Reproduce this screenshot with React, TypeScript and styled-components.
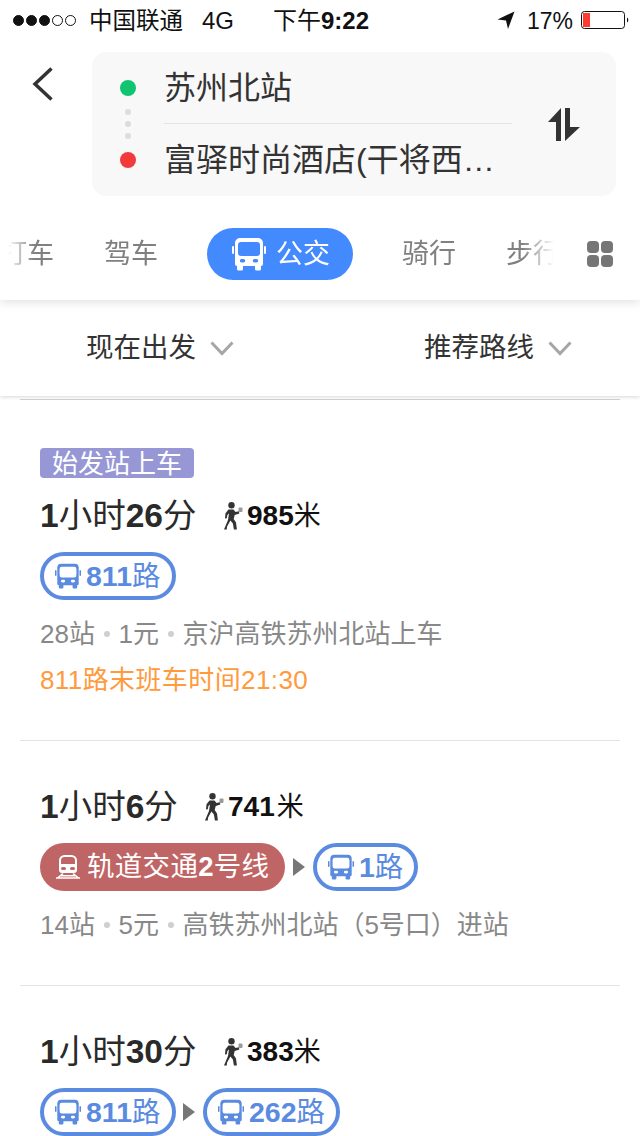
import styled, { createGlobalStyle } from 'styled-components';

const GlobalStyle = createGlobalStyle`
  html, body {
    margin: 0;
    padding: 0;
    background: #fff;
  }
  body {
    font-family: 'Liberation Sans', 'Noto Sans CJK SC', sans-serif;
  }
`;

const BusIcon = ({ color, size = 26 }: { color: string; size?: number }) => (
  <svg width={size} height={size} viewBox='0 0 34 34'>
    <path
      fill={color}
      fillRule='evenodd'
      d='M8 1h18a5 5 0 0 1 5 5v21a2 2 0 0 1-2 2v3a1.500 1.500 0 0 1-1.500 1.500h-3A1.500 1.500 0 0 1 23 32v-3H11v3a1.500 1.500 0 0 1-1.500 1.500h-3A1.500 1.500 0 0 1 5 32v-3a2 2 0 0 1-2-2V6a5 5 0 0 1 5-5zM9 5a3 3 0 0 0-3 3v8a3 3 0 0 0 3 3h16a3 3 0 0 0 3-3V8a3 3 0 0 0-3-3zM9.500 22a1.700 1.700 0 0 0 0 3.400h2a1.700 1.700 0 0 0 0-3.400zM22.500 22a1.700 1.700 0 0 0 0 3.400h2a1.700 1.700 0 0 0 0-3.400z'
    />
    <rect x='0' y='9' width='2' height='8' rx='1' fill={color} />
    <rect x='32' y='9' width='2' height='8' rx='1' fill={color} />
  </svg>
);

const RailIcon = () => (
  <svg width={26} height={24} viewBox='0 0 26 24'>
    <path
      fill='#fff'
      fillRule='evenodd'
      d='M9.500 0h7A5.500 5.500 0 0 1 22 5.500V15a3 3 0 0 1-3 3H7a3 3 0 0 1-3-3V5.500A5.500 5.500 0 0 1 9.500 0zM9.500 2A3.500 3.500 0 0 0 6 5.500V9h14V5.500A3.500 3.500 0 0 0 16.500 2zM7.500 12a1.500 1.500 0 0 0 0 3h2a1.500 1.500 0 0 0 0-3zM16.500 12a1.500 1.500 0 0 0 0 3h2a1.500 1.500 0 0 0 0-3z'
    />
    <path d='M8 18.500L2.500 23M18 18.500L23.500 23M1 23h24M5.500 20.800h15' fill='none' stroke='#fff' strokeWidth='1.600' />
  </svg>
);

const WalkIcon = () => (
  <svg width={20} height={28} viewBox='0 0 20 28'>
    <circle cx='7.500' cy='3.300' r='3.200' fill='#333' />
    <path
      fill='#333'
      d='M4.500 7.500h5l2 2.500 3.300-.8.600 2.300-4.700 1.500-1 4 2.300 3.500.9 7h-3l-1-6-2.500-3-3.400 6.300-.2 2.700H0l.4-1 3.600-8.500 1-6.500-1.600 1.500-.6 3.300L1 16.500l.5-5.300z'
    />
    <rect x='14.500' y='5.500' width='4' height='4.500' rx='1' fill='#999' />
  </svg>
);

const Chevron = () => (
  <svg width={24} height={15} viewBox='0 0 24 15' fill='none'>
    <path d='M1.500 1.500L12 12.500 22.500 1.500' stroke='#a6a6a6' strokeWidth='3' />
  </svg>
);

const Page = styled.div`
  width: 640px;
  height: 1136px;
  overflow: hidden;
  background: #fff;
  color: #333;
`;

const Header = styled.header`
  position: relative;
  z-index: 2;
  height: 300px;
  background: #fff;
  box-shadow: 0 2px 10px rgba(0, 0, 0, 0.13);
`;

const StatusBar = styled.div`
  height: 40px;
  line-height: 42px;
  display: flex;
  align-items: baseline;
  color: #111;
  font-size: 24px;

  & > svg {
    align-self: center;
  }
`;

const Signal = styled.div`
  align-self: center;
  display: flex;
  gap: 2px;
  margin: 1px 0 0 13px;
  width: 76px;
`;

const SignalDot = styled.span<{ $on: boolean }>`
  width: 11px;
  height: 11px;
  box-sizing: border-box;
  border-radius: 50%;
  border: 1px solid #111;
  background: ${(p) => (p.$on ? '#111' : 'transparent')};
`;

const Carrier = styled.span`
  width: 113px;
  font-size: 23.5px;
`;

const Network = styled.span`
  width: 71px;
`;

const Clock = styled.span`
  width: 224px;
  & b {
    font-weight: 700;
  }
`;

const Percent = styled.span`
  margin-left: 12px;
  width: 54px;
  font-size: 23px;
`;

const RouteBar = styled.div`
  display: flex;
  margin-top: 12px;
`;

const BackButton = styled.div`
  width: 92px;
  padding: 15px 0 0 32px;
  box-sizing: border-box;
`;

const SearchCard = styled.div`
  width: 524px;
  height: 144px;
  box-sizing: border-box;
  padding-left: 28px;
  border-radius: 14px;
  background: #f8f8f8;
  display: flex;
  align-items: center;
`;

const DotColumn = styled.div`
  width: 16px;
  display: flex;
  flex-direction: column;
  align-items: center;
`;

const EndDot = styled.span<{ $color: string }>`
  width: 16px;
  height: 16px;
  border-radius: 50%;
  background: ${(p) => p.$color};
`;

const SmallDots = styled.div`
  margin: 13px 0;
  display: flex;
  flex-direction: column;
  gap: 6px;
`;

const SmallDot = styled.span`
  width: 6px;
  height: 6px;
  border-radius: 50%;
  background: #dcdcdc;
`;

const Places = styled.div`
  margin-left: 28px;
  width: 348px;
`;

const Place = styled.div`
  height: 71px;
  line-height: 72px;
  font-size: 32px;
  color: #333;
  white-space: nowrap;

  & + & {
    border-top: 1px solid #e4e4e4;
    height: 72px;
  }
`;

const SwapButton = styled.div`
  margin-left: 36px;
  width: 32px;
  height: 33px;
`;

const TabRow = styled.div`
  display: flex;
  align-items: center;
  margin-top: 32px;
  height: 52px;
`;

const TabStrip = styled.div`
  width: 566px;
  display: flex;
  align-items: center;
  overflow: hidden;
  white-space: nowrap;
  line-height: 52px;
  mask-image: linear-gradient(
    to right,
    transparent 8px,
    #000 34px,
    #000 522px,
    transparent 554px
  );
`;

const Tab = styled.span<{ $gap: number }>`
  flex: none;
  font-size: 27px;
  color: #808080;
  margin-left: ${(p) => p.$gap}px;
`;

const ActiveTab = styled.div`
  flex: none;
  margin-left: 49px;
  width: 146px;
  height: 52px;
  box-sizing: border-box;
  padding-left: 25px;
  border-radius: 26px;
  background: #448aff;
  color: #fff;
  font-size: 27px;
  display: flex;
  align-items: center;
  gap: 10px;
`;

const GridIcon = styled.div`
  margin-left: 21px;
  display: grid;
  grid-template-columns: 12px 12px;
  gap: 2px;
`;

const GridCell = styled.span`
  height: 12px;
  border-radius: 4px;
  background: #767676;
`;

const FilterBar = styled.div`
  position: relative;
  z-index: 1;
  height: 96px;
  background: #fff;
  display: flex;
  align-items: center;
  box-shadow: 0 1px 4px rgba(0, 0, 0, 0.16);
`;

const Filter = styled.div<{ $left: number }>`
  display: flex;
  align-items: center;
  gap: 14px;
  margin-left: ${(p) => p.$left}px;
  font-size: 27.5px;
  line-height: 42px;
  color: #333;
`;

const RouteList = styled.div`
  margin: 3px 20px 0;
  border-top: 1px solid #d2d2d2;
`;

const RouteItem = styled.section`
  padding: 46px 20px 44px;
  border-bottom: 1px solid #e4e4e4;

  &:last-child {
    border-bottom: none;
  }
`;

const StartTag = styled.div`
  width: 154px;
  height: 30px;
  margin-top: 2px;
  margin-bottom: 18px;
  border-radius: 4px;
  background: #9797d6;
  color: #fff;
  font-size: 26px;
  line-height: 32px;
  text-align: center;
`;

const Summary = styled.div`
  height: 40px;
  line-height: 40px;
  display: flex;
  align-items: center;
`;

const Duration = styled.span`
  font-size: 33.5px;
  color: #2a2a2a;
  width: 184px;
  & b {
    font-weight: 700;
  }
`;

const ShortDuration = styled(Duration)`
  width: 165px;
`;

const Walk = styled.span`
  display: flex;
  align-items: center;
  gap: 3px;
  font-size: 27px;
  color: #111;
  & b {
    font-size: 28px;
    font-weight: 700;
  }
`;

const WideUnit = styled.span`
  margin-left: 2px;
`;

const Lines = styled.div`
  display: flex;
  align-items: center;
  margin-top: 16px;
`;

const LinePill = styled.div`
  height: 48px;
  line-height: 42px;
  box-sizing: border-box;
  padding: 0 11px;
  border: 4px solid #5b8be0;
  border-radius: 24px;
  display: flex;
  align-items: center;
  gap: 5px;
  font-size: 28.5px;
  color: #5b8be0;
  & b {
    font-weight: 700;
  }
`;

const RailPill = styled(LinePill)`
  border: none;
  padding: 0 16px 0 15px;
  gap: 6px;
  font-size: 27.5px;
  letter-spacing: 0.3px;
  background: #c06565;
  color: #fff;
`;

const Arrow = styled.span`
  width: 0;
  height: 0;
  margin: 0 8px 0 7.5px;
  border-left: 12px solid #777;
  border-top: 9px solid transparent;
  border-bottom: 9px solid transparent;
`;

const Meta = styled.div`
  margin-top: 18px;
  height: 32px;
  line-height: 32px;
  font-size: 26px;
  color: #888;
  display: flex;
  align-items: center;
`;

const MetaDot = styled.span`
  width: 6px;
  height: 6px;
  margin: 0 8.75px;
  border-radius: 50%;
  background: #cfcfcf;
`;

const Notice = styled.div`
  margin-top: 14px;
  height: 32px;
  line-height: 32px;
  font-size: 26px;
  letter-spacing: 0.4px;
  color: #ff9a3d;
`;

const BusLine = ({ name }: { name: string }) => (
  <LinePill>
    <BusIcon color='#5b8be0' />
    <span>
      <b>{name}</b>路
    </span>
  </LinePill>
);

export default function App() {
  return (
    <Page>
      <GlobalStyle />
      <Header>
        <StatusBar>
          <Signal>
            {[true, true, true, false, false].map((on, index) => (
              <SignalDot key={index} $on={on} />
            ))}
          </Signal>
          <Carrier>中国联通</Carrier>
          <Network>4G</Network>
          <Clock>
            下午<b>9:22</b>
          </Clock>
          <svg width={18} height={18} viewBox='0 0 18 18'>
            <path d='M17.500 0.500L0.500 8.500 9 9.500 11 18z' fill='#111' />
          </svg>
          <Percent>17%</Percent>
          <svg width={48} height={20} viewBox='0 0 48 20'>
            <rect x='0.500' y='1.500' width='43' height='17' rx='3' fill='#fff' stroke='#111' />
            <rect x='2' y='3' width='7' height='14' fill='#ff3b30' />
            <path d='M46 7.500a3 3 0 0 1 0 5z' fill='#111' />
          </svg>
        </StatusBar>
        <RouteBar>
          <BackButton>
            <svg width={22} height={34} viewBox='0 0 22 34' fill='none'>
              <path d='M19.500 1.500L3 17l16.500 15.500' stroke='#333' strokeWidth='3.500' />
            </svg>
          </BackButton>
          <SearchCard>
            <DotColumn>
              <EndDot $color='#11c46f' />
              <SmallDots>
                <SmallDot />
                <SmallDot />
                <SmallDot />
              </SmallDots>
              <EndDot $color='#f23a3c' />
            </DotColumn>
            <Places>
              <Place>苏州北站</Place>
              <Place>富驿时尚酒店(干将西…</Place>
            </Places>
            <SwapButton>
              <svg width={32} height={33} viewBox='0 0 32 33'>
                <path d='M13 0v33H8V14H0zM17 0h5v19h10L17 33z' fill='#333' />
              </svg>
            </SwapButton>
          </SearchCard>
        </RouteBar>
        <TabRow>
          <TabStrip>
            <Tab $gap={0}>打车</Tab>
            <Tab $gap={50}>驾车</Tab>
            <ActiveTab>
              <BusIcon color='#fff' size={34} />
              公交
            </ActiveTab>
            <Tab $gap={49}>骑行</Tab>
            <Tab $gap={50}>步行</Tab>
          </TabStrip>
          <GridIcon>
            <GridCell />
            <GridCell />
            <GridCell />
            <GridCell />
          </GridIcon>
        </TabRow>
      </Header>
      <FilterBar>
        <Filter $left={86}>
          现在出发
          <Chevron />
        </Filter>
        <Filter $left={190}>
          推荐路线
          <Chevron />
        </Filter>
      </FilterBar>
      <RouteList>
        <RouteItem>
          <StartTag>始发站上车</StartTag>
          <Summary>
            <Duration>
              <b>1</b>小时<b>26</b>分
            </Duration>
            <Walk>
              <WalkIcon />
              <span>
                <b>985</b>米
              </span>
            </Walk>
          </Summary>
          <Lines>
            <BusLine name='811' />
          </Lines>
          <Meta>
            28站
            <MetaDot />
            1元
            <MetaDot />
            京沪高铁苏州北站上车
          </Meta>
          <Notice>811路末班车时间21:30</Notice>
        </RouteItem>
        <RouteItem>
          <Summary>
            <ShortDuration>
              <b>1</b>小时<b>6</b>分
            </ShortDuration>
            <Walk>
              <WalkIcon />
              <span>
                <b>741</b>
                <WideUnit>米</WideUnit>
              </span>
            </Walk>
          </Summary>
          <Lines>
            <RailPill>
              <RailIcon />
              <span>
                轨道交通<b>2</b>号线
              </span>
            </RailPill>
            <Arrow />
            <BusLine name='1' />
          </Lines>
          <Meta>
            14站
            <MetaDot />
            5元
            <MetaDot />
            高铁苏州北站（5号口）进站
          </Meta>
        </RouteItem>
        <RouteItem>
          <Summary>
            <Duration>
              <b>1</b>小时<b>30</b>分
            </Duration>
            <Walk>
              <WalkIcon />
              <span>
                <b>383</b>米
              </span>
            </Walk>
          </Summary>
          <Lines>
            <BusLine name='811' />
            <Arrow />
            <BusLine name='262' />
          </Lines>
        </RouteItem>
      </RouteList>
    </Page>
  );
}
